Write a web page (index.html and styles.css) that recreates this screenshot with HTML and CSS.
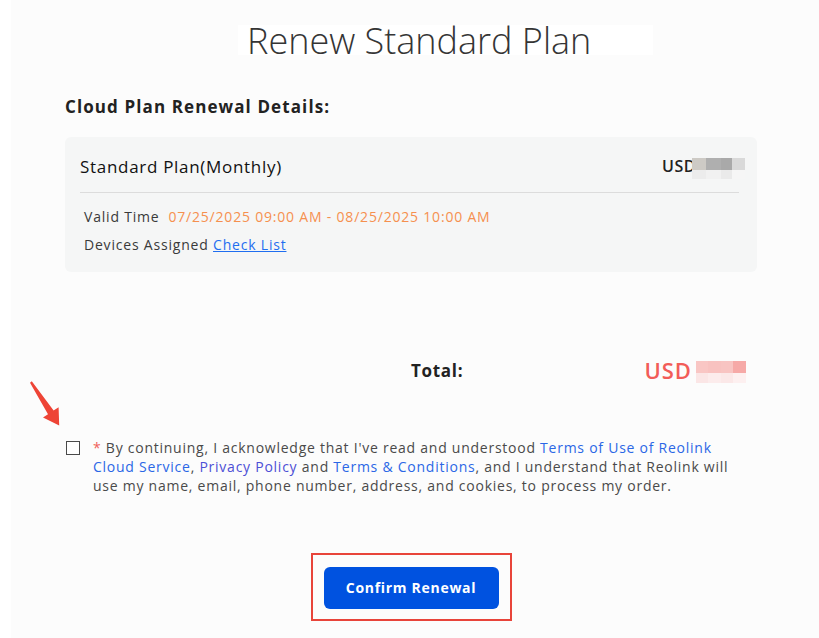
FILE: index.html
```html
<!DOCTYPE html>
<html lang="en">
<head>
<meta charset="utf-8">
<title>Renew Standard Plan</title>
<link rel="stylesheet" href="styles.css">
</head>
<body>
<div class="page">
  <div class="title-row"><h1 class="title">Renew Standard Plan</h1></div>
  <div class="content">
    <h2 class="section-title">Cloud Plan Renewal Details:</h2>
    <div class="card">
      <div class="card-head">
        <span class="plan-name">Standard Plan(Monthly)</span>
        <span class="price">USD<span class="pix pix-gray"><i class="g1"></i><i class="g2"></i><i class="g3"></i><i class="g4"></i><i class="l1"></i><i class="l2"></i><i class="l3"></i><i class="l4"></i></span></span>
      </div>
      <div class="card-body">
        <div class="info-row"><span class="label">Valid Time</span><span class="date">07/25/2025 09:00 AM - 08/25/2025 10:00 AM</span></div>
        <div class="info-row"><span class="label">Devices Assigned</span> <a class="check-link" href="#">Check List</a></div>
      </div>
    </div>
    <div class="total-row">
      <span class="total-label">Total:</span>
      <span class="total-amount">USD<span class="pix pix-pink"><i class="p1"></i><i class="p2"></i><i class="p3"></i><i class="p4"></i><i class="q1"></i><i class="q2"></i><i class="q3"></i><i class="q4"></i></span></span>
    </div>
    <div class="agree">
      <span class="checkbox"></span>
      <p class="agree-text"><span class="req">*</span> By continuing, I acknowledge that I've read and understood <a class="lnk" href="#">Terms of Use of Reolink Cloud Service</a>, <a class="lnk lnk-v" href="#">Privacy Policy</a> and <a class="lnk" href="#">Terms &amp; Conditions</a>, and I understand that Reolink will use my name, email, phone number, address, and cookies, to process my order.</p>
    </div>
    <div class="actions">
      <div class="highlight"><button class="confirm" type="button">Confirm Renewal</button></div>
    </div>
  </div>
  <svg class="arrow" viewBox="28 378 34 50" width="34" height="50" aria-hidden="true">
    <polygon points="31.8,381.3 53.6,410.6 58.6,407.2 59.2,425.5 43.0,417.6 48.0,414.2 30.0,382.7" fill="#ee4436"/>
  </svg>
</div>
</body>
</html>
```

FILE: styles.css
```css
* { box-sizing: border-box; }
html, body { margin: 0; padding: 0; background: #ffffff; }
body { font-family: "Open Sans", "Liberation Sans", sans-serif; color: #333; }

.page {
  position: relative;
  margin-left: 11px;
  min-height: 638px;
  background: #fcfcfc;
  padding-top: 25px;
}

.title-row { padding-left: 227px; }
.title {
  display: inline-block;
  margin: 0;
  width: 415px;
  height: 30px;
  padding-left: 9px;
  background: #ffffff;
  font-family: "Open Sans", sans-serif;
  font-weight: 300;
  font-size: 36px;
  line-height: 32px;
  color: #353535;
  white-space: nowrap;
}

.content { padding: 0 62px 0 54px; }

.section-title {
  margin: 36px 0 0;
  font-size: 17px;
  font-weight: 700;
  line-height: 24px;
  letter-spacing: 1.1px;
  color: #222;
}

.card {
  margin-top: 18px;
  background: #f5f6f6;
  border-radius: 6px;
  padding: 14px 18px 17px 15px;
}
.card-head {
  display: flex;
  justify-content: space-between;
  align-items: center;
  height: 30px;
  margin-bottom: 11px;
}
.card-head + .card-body { border-top: 1px solid #dcdcdc; }
.plan-name { font-size: 17px; font-weight: 500; letter-spacing: 0.7px; color: #111; }
.price {
  display: flex;
  align-items: center;
  font-size: 16px;
  font-weight: 600;
  letter-spacing: 0.5px;
  color: #222;
  margin-right: -6px;
}

.card-body { padding: 14px 0 0 4px; }
.info-row {
  font-size: 14px;
  line-height: 20px;
  letter-spacing: 0.8px;
  color: #3a3a3a;
}
.info-row + .info-row { margin-top: 8px; }
.date { color: #f5904f; margin-left: 9px; }
.check-link { color: #1f6ef0; text-decoration: underline; }

.pix {
  display: grid;
  grid-template-columns: 14px 15px 11px 13px;
  grid-template-rows: 12px 9px;
  margin-left: -4px;
}
.pix i { display: block; }
.pix-gray { margin-top: 4px; }
.g1 { background: #cdcac5; } .g2 { background: #afafaf; } .g3 { background: #a9a9a9; } .g4 { background: #d9d9d9; }
.l1 { background: #ececec; } .l2 { background: #f1f1f1; } .l3 { background: #eaeaea; } .l4 { background: #f6f6f6; }

.total-row {
  display: flex;
  align-items: center;
  margin-top: 82px;
  padding-left: 346px;
  padding-right: 11px;
  height: 32px;
}
.total-label { font-size: 17px; font-weight: 700; letter-spacing: 0.7px; color: #222; }
.total-amount {
  margin-left: auto;
  display: flex;
  align-items: center;
  font-size: 22px;
  font-weight: 600;
  letter-spacing: 1px;
  color: #f25c58;
}
.pix-pink { margin-left: 4px; margin-top: 4px; grid-template-columns: 12px 13px 12px 13px; grid-template-rows: 12px 10px; }
.p1 { background: #f9c6c4; } .p2 { background: #f8c2c0; } .p3 { background: #f8c4c2; } .p4 { background: #f6a9a7; }
.q1 { background: #fbe6e6; } .q2 { background: #fcecec; } .q3 { background: #fbe8e8; } .q4 { background: #fdf0f0; }

.agree {
  display: flex;
  align-items: flex-start;
  margin-top: 52px;
  padding-right: 17px;
}
.checkbox {
  flex: none;
  width: 14px;
  height: 14px;
  margin: 3px 0 0 1px;
  border: 1.5px solid #4a4a4a;
  background: #fff;
}
.agree-text {
  margin: 0 0 0 13px;
  font-size: 14px;
  line-height: 19.2px;
  letter-spacing: 0.75px;
  color: #4a4a4a;
}
.req { color: #f0605a; }
.lnk { color: #2b67e6; text-decoration: none; }
.lnk-v { color: #4d4fd6; }

.actions {
  display: flex;
  justify-content: center;
  margin-top: 57px;
}
.highlight {
  border: 2px solid #e8443a;
  padding: 12px 11px 10px;
}
.confirm {
  display: block;
  width: 175px;
  height: 42px;
  border: none;
  border-radius: 6px;
  background: #0052e0;
  color: #fff;
  font-family: "Open Sans", sans-serif;
  font-size: 14px;
  font-weight: 700;
  letter-spacing: 0.7px;
}

.arrow {
  position: absolute;
  left: 17px;
  top: 378px;
}
```
